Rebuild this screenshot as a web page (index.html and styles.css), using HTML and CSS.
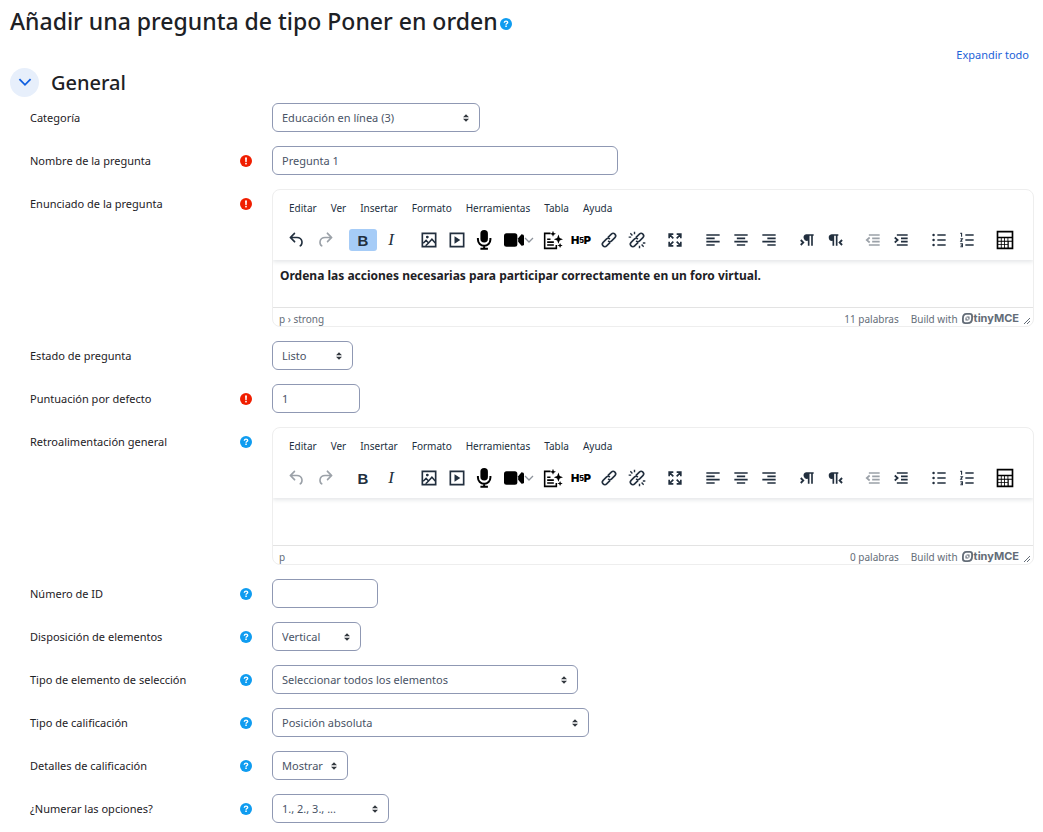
FILE: index.html
```html
<!DOCTYPE html>
<html lang="es">
<head>
    <meta charset="UTF-8">
    <meta name="viewport" content="width=device-width, initial-scale=1">
    <title>Añadir una pregunta de tipo Poner en orden</title>
    <link rel="stylesheet" href="styles.css">
</head>
<body>
    <!-- icon sprite -->
    <svg class="sprite" aria-hidden="true">
        <symbol id="i-help" viewBox="0 0 12 12">
            <circle cx="6" cy="6" r="6" fill="#0f9cf0"/>
            <path d="M4.3 4.7C4.4 3.6 5.1 3.1 6 3.1s1.7.5 1.7 1.4c0 1-1.6 1.1-1.6 2.2" fill="none" stroke="#fff" stroke-width="1.4"/>
            <rect x="5.3" y="7.5" width="1.5" height="1.5" fill="#fff"/>
        </symbol>
        <symbol id="i-required" viewBox="0 0 12 12">
            <circle cx="6" cy="6" r="6" fill="#f01e00"/>
            <path d="M5 2.5h2L6.7 7H5.3z" fill="#fff"/>
            <rect x="5.2" y="7.8" width="1.6" height="1.6" fill="#fff"/>
        </symbol>
        <symbol id="i-undo" viewBox="0 0 24 24"><path d="M6.4 8H12c3.7 0 6.2 2 6.8 5.1.6 2.7-.4 5.6-2.3 6.8a1 1 0 0 1-1-1.8c1.1-.6 1.8-2.7 1.4-4.6-.5-2.1-2.1-3.5-4.9-3.5H6.4l3.3 3.3a1 1 0 1 1-1.4 1.4l-5-5a1 1 0 0 1 0-1.4l5-5a1 1 0 0 1 1.4 1.4L6.4 8Z"/></symbol>
        <symbol id="i-redo" viewBox="0 0 24 24"><path d="M17.6 10H12c-2.8 0-4.4 1.4-4.9 3.5-.4 2 .3 4 1.4 4.6a1 1 0 1 1-1 1.8c-2-1.2-2.9-4.1-2.3-6.8.6-3 3-5.1 6.8-5.1h5.6l-3.3-3.3a1 1 0 1 1 1.4-1.4l5 5a1 1 0 0 1 0 1.4l-5 5a1 1 0 0 1-1.4-1.4l3.3-3.3Z"/></symbol>
        <symbol id="i-image" viewBox="0 0 24 24">
            <path d="M3 3h18v18H3zM5 5v14h14V5z" fill-rule="evenodd"/>
            <path d="M5 16l3.5-3.5 3 3L15.5 11l4 4.500M8 19l3.500-3.500" fill="none" stroke="currentColor" stroke-width="1.8"/>
            <circle cx="10" cy="8.500" r="1.700"/>
        </symbol>
        <symbol id="i-media" viewBox="0 0 24 24">
            <path d="M3 3h18v18H3zM5 5v14h14V5z" fill-rule="evenodd"/>
            <path d="M9 7.500l7 4.500-7 4.500z"/>
        </symbol>
        <symbol id="i-mic" viewBox="0 0 24 24">
            <rect x="6.500" y="0" width="9" height="15" rx="4.500"/>
            <path d="M3.500 9.500v2a7.500 7.500 0 0 0 15 0v-2M11 18.500v4M6.500 22.500h9" fill="none" stroke="currentColor" stroke-width="2.400"/>
        </symbol>
        <symbol id="i-video" viewBox="0 0 24 24">
            <rect x="0" y="4" width="16" height="16" rx="3"/>
            <path d="M17 10l4-5q3 0 3 2v10q0 2-3 2l-4-5z"/>
        </symbol>
        <symbol id="i-chevron" viewBox="0 0 10 10"><path d="M1 3l4 4 4-4" fill="none" stroke="currentColor" stroke-width="1.300"/></symbol>
        <symbol id="i-ai" viewBox="0 0 24 24">
            <path d="M9 4H2v18h14v-4M5 11h4M5 14.500h8M5 18h8" fill="none" stroke="currentColor" stroke-width="1.900"/>
            <path d="M18.500 5.500l1.500 4 4 1.500-4 1.500-1.500 4-1.500-4-4-1.500 4-1.500zM12 1l1 2.600 2.600 1-2.600 1-1 2.600-1-2.600-2.600-1 2.600-1zM20.500 15.500l.9 2.200 2.200.9-2.200.9-.9 2.200-.9-2.200-2.200-.9 2.200-.9z"/>
        </symbol>
        <symbol id="i-link" viewBox="0 0 24 24">
            <g fill="none" stroke="currentColor" stroke-width="1.900" transform="rotate(-45 12 12)">
                <path d="M11 15H5a3 3 0 0 1-3-3 3 3 0 0 1 3-3h5.500a3 3 0 0 1 3 3"/>
                <path d="M13 9h6a3 3 0 0 1 3 3 3 3 0 0 1-3 3h-5.500a3 3 0 0 1-3-3"/>
            </g>
        </symbol>
        <symbol id="i-unlink" viewBox="0 0 24 24">
            <use href="#i-link" width="24" height="24"/>
            <path d="M9 2v3M2 8.500h3M4 4l2.500 2.500M15 19v3M19 15.500h3M17.500 17.500L20 20" fill="none" stroke="currentColor" stroke-width="1.700"/>
        </symbol>
        <symbol id="i-full" viewBox="0 0 24 24"><path d="M5 10V5h5M14 5h5v5M19 14v5h-5M10 19H5v-5M5.500 5.500L10 10M18.500 5.500L14 10M18.500 18.500L14 14M5.500 18.500L10 14" fill="none" stroke="currentColor" stroke-width="2"/></symbol>
        <symbol id="i-left" viewBox="0 0 24 24"><path d="M4 6h16M4 10h10M4 14h16M4 18h10" fill="none" stroke="currentColor" stroke-width="2"/></symbol>
        <symbol id="i-center" viewBox="0 0 24 24"><path d="M4 6h16M7 10h10M4 14h16M7 18h10" fill="none" stroke="currentColor" stroke-width="2"/></symbol>
        <symbol id="i-right" viewBox="0 0 24 24"><path d="M4 6h16M10 10h10M4 14h16M10 18h10" fill="none" stroke="currentColor" stroke-width="2"/></symbol>
        <symbol id="i-ltr" viewBox="0 0 24 24">
            <path d="M11 5h9v2h-1v12h-2V7h-2v12h-2v-6a4 4 0 0 1-2-8z"/>
            <path d="M4.500 12l3 3-3 3" fill="none" stroke="currentColor" stroke-width="2.200"/>
        </symbol>
        <symbol id="i-rtl" viewBox="0 0 24 24">
            <path d="M8 5h8v2h-1v12h-2V7h-2v12H9v-6a4 4 0 0 1-1-8z"/>
            <path d="M20.500 12l-3 3 3 3" fill="none" stroke="currentColor" stroke-width="2.200"/>
        </symbol>
        <symbol id="i-outdent" viewBox="0 0 24 24"><path d="M7 6h13M11 10h9M11 14h9M7 18h13M8 9l-3.500 3L8 15" fill="none" stroke="currentColor" stroke-width="2"/></symbol>
        <symbol id="i-indent" viewBox="0 0 24 24"><path d="M7 6h13M12 10h8M12 14h8M7 18h13M4.500 9L8 12l-3.500 3" fill="none" stroke="currentColor" stroke-width="2"/></symbol>
        <symbol id="i-ul" viewBox="0 0 24 24">
            <path d="M10 6h10M10 12h10M10 18h10" fill="none" stroke="currentColor" stroke-width="2"/>
            <circle cx="5.500" cy="6" r="1.500"/><circle cx="5.500" cy="12" r="1.500"/><circle cx="5.500" cy="18" r="1.500"/>
        </symbol>
        <symbol id="i-ol" viewBox="0 0 24 24">
            <path d="M10 6h10M10 12h10M10 18h10" fill="none" stroke="currentColor" stroke-width="2"/>
            <path d="M4 4h1.500v4M4 10.500h2.500L4.500 13.500h2M4 16.500h2.500v3.500H4M4.500 18.200h2" fill="none" stroke="currentColor" stroke-width="1.300"/>
        </symbol>
        <symbol id="i-calc" viewBox="0 0 24 24"><path d="M2 1h20v22H2zM4 3v5h16V3zM4 10v3h3v-3zM8 10v3h3v-3zM12 10v3h3v-3zM16 10v3h4v-3zM4 14v3h3v-3zM8 14v3h3v-3zM12 14v3h3v-3zM16.500 14v7H20v-7zM4 18v3h3v-3zM8 18v3h3v-3zM12 18v3h3v-3z" fill-rule="evenodd"/></symbol>
        <symbol id="i-tiny" viewBox="0 0 12 12">
            <path d="M5 1h3.500Q11 1 11 3.500V6q0 5-5 5H3.500Q1 11 1 8.500V6q0-5 4-5z" fill="none" stroke="currentColor" stroke-width="2"/>
            <path d="M5 3.800h3.200V7H7V8.200H3.800V5H5zM5 5v2h2V5z" fill-rule="evenodd"/>
        </symbol>
        <symbol id="i-resize" viewBox="0 0 8 8"><path d="M1 7l6-6M4 7l3-3" fill="none" stroke="currentColor" stroke-width="1"/></symbol>
    </svg>

    <main class="page">
        <h1 class="title">Añadir una pregunta de tipo Poner en orden<button type="button" class="icon_btn" aria-label="Ayuda"><svg class="mark"><use href="#i-help"/></svg></button></h1>
        <div class="expand"><a href="#general">Expandir todo</a></div>

        <form id="general">
            <div class="section_head">
                <button type="button" class="toggle" aria-label="General"><svg class="toggle_icon"><use href="#i-chevron"/></svg></button>
                <h2>General</h2>
            </div>

            <div class="fields">
                <div class="row">
                    <div class="row_label"><label for="category">Categoría</label></div>
                    <select id="category" class="control w_category"><option>Educación en línea (3)</option></select>
                </div>
                <div class="row">
                    <div class="row_label"><label for="name">Nombre de la pregunta</label><svg class="mark"><use href="#i-required"/></svg></div>
                    <input id="name" type="text" class="control w_name" value="Pregunta 1">
                </div>
                <div class="row">
                    <div class="row_label"><span id="l_text">Enunciado de la pregunta</span><svg class="mark"><use href="#i-required"/></svg></div>
                    <div class="editor">
                        <div class="editor_head">
                            <div class="menubar">
                                <button type="button">Editar</button><button type="button">Ver</button><button type="button">Insertar</button><button type="button">Formato</button><button type="button">Herramientas</button><button type="button">Tabla</button><button type="button">Ayuda</button>
                            </div>
                            <div class="toolbar">
                                <div class="group">
                                    <button type="button" aria-label="Deshacer"><svg><use href="#i-undo"/></svg></button>
                                    <button type="button" aria-label="Rehacer" disabled><svg><use href="#i-redo"/></svg></button>
                                </div>
                                <div class="group">
                                    <button type="button" class="bold active">B</button>
                                    <button type="button" class="italic">I</button>
                                </div>
                                <div class="group">
                                    <button type="button" aria-label="Imagen"><svg><use href="#i-image"/></svg></button>
                                    <button type="button" aria-label="Multimedia"><svg><use href="#i-media"/></svg></button>
                                    <button type="button" class="dark" aria-label="Grabar audio"><svg><use href="#i-mic"/></svg></button>
                                    <button type="button" class="dark split" aria-label="Grabar video"><svg><use href="#i-video"/></svg><svg class="caret"><use href="#i-chevron"/></svg></button>
                                    <button type="button" class="dark" aria-label="Generar con IA"><svg><use href="#i-ai"/></svg></button>
                                    <button type="button" class="dark h5p">H<small>5</small>P</button>
                                    <button type="button" aria-label="Enlace"><svg><use href="#i-link"/></svg></button>
                                    <button type="button" aria-label="Quitar enlace"><svg><use href="#i-unlink"/></svg></button>
                                </div>
                                <div class="group">
                                    <button type="button" aria-label="Pantalla completa"><svg><use href="#i-full"/></svg></button>
                                </div>
                                <div class="group">
                                    <button type="button" aria-label="Izquierda"><svg><use href="#i-left"/></svg></button>
                                    <button type="button" aria-label="Centro"><svg><use href="#i-center"/></svg></button>
                                    <button type="button" aria-label="Derecha"><svg><use href="#i-right"/></svg></button>
                                </div>
                                <div class="group">
                                    <button type="button" aria-label="De izquierda a derecha"><svg><use href="#i-ltr"/></svg></button>
                                    <button type="button" aria-label="De derecha a izquierda"><svg><use href="#i-rtl"/></svg></button>
                                </div>
                                <div class="group">
                                    <button type="button" aria-label="Reducir sangría" disabled><svg><use href="#i-outdent"/></svg></button>
                                    <button type="button" aria-label="Aumentar sangría"><svg><use href="#i-indent"/></svg></button>
                                </div>
                                <div class="group">
                                    <button type="button" aria-label="Viñetas"><svg><use href="#i-ul"/></svg></button>
                                    <button type="button" aria-label="Numeración"><svg><use href="#i-ol"/></svg></button>
                                </div>
                                <div class="group">
                                    <button type="button" class="dark" aria-label="Ecuación"><svg><use href="#i-calc"/></svg></button>
                                </div>
                            </div>
                        </div>
                        <div class="editor_body" contenteditable="true" role="textbox" aria-labelledby="l_text"><p><strong>Ordena las acciones necesarias para participar correctamente en un foro virtual.</strong></p></div>
                        <div class="statusbar">
                            <span class="path">p › strong</span>
                            <span>11 palabras</span>
                            <span class="brand">Build with <svg class="tiny"><use href="#i-tiny"/></svg><b>tinyMCE</b></span>
                            <svg class="resize"><use href="#i-resize"/></svg>
                        </div>
                    </div>
                </div>
                <div class="row">
                    <div class="row_label"><label for="status">Estado de pregunta</label></div>
                    <select id="status" class="control w_status"><option>Listo</option></select>
                </div>
                <div class="row">
                    <div class="row_label"><label for="mark">Puntuación por defecto</label><svg class="mark"><use href="#i-required"/></svg></div>
                    <input id="mark" type="text" class="control w_mark" value="1">
                </div>
                <div class="row">
                    <div class="row_label"><span id="l_feedback">Retroalimentación general</span><button type="button" class="icon_btn" aria-label="Ayuda"><svg class="mark"><use href="#i-help"/></svg></button></div>
                    <div class="editor">
                        <div class="editor_head">
                            <div class="menubar">
                                <button type="button">Editar</button><button type="button">Ver</button><button type="button">Insertar</button><button type="button">Formato</button><button type="button">Herramientas</button><button type="button">Tabla</button><button type="button">Ayuda</button>
                            </div>
                            <div class="toolbar">
                                <div class="group">
                                    <button type="button" aria-label="Deshacer" disabled><svg><use href="#i-undo"/></svg></button>
                                    <button type="button" aria-label="Rehacer" disabled><svg><use href="#i-redo"/></svg></button>
                                </div>
                                <div class="group">
                                    <button type="button" class="bold">B</button>
                                    <button type="button" class="italic">I</button>
                                </div>
                                <div class="group">
                                    <button type="button" aria-label="Imagen"><svg><use href="#i-image"/></svg></button>
                                    <button type="button" aria-label="Multimedia"><svg><use href="#i-media"/></svg></button>
                                    <button type="button" class="dark" aria-label="Grabar audio"><svg><use href="#i-mic"/></svg></button>
                                    <button type="button" class="dark split" aria-label="Grabar video"><svg><use href="#i-video"/></svg><svg class="caret"><use href="#i-chevron"/></svg></button>
                                    <button type="button" class="dark" aria-label="Generar con IA"><svg><use href="#i-ai"/></svg></button>
                                    <button type="button" class="dark h5p">H<small>5</small>P</button>
                                    <button type="button" aria-label="Enlace"><svg><use href="#i-link"/></svg></button>
                                    <button type="button" aria-label="Quitar enlace"><svg><use href="#i-unlink"/></svg></button>
                                </div>
                                <div class="group">
                                    <button type="button" aria-label="Pantalla completa"><svg><use href="#i-full"/></svg></button>
                                </div>
                                <div class="group">
                                    <button type="button" aria-label="Izquierda"><svg><use href="#i-left"/></svg></button>
                                    <button type="button" aria-label="Centro"><svg><use href="#i-center"/></svg></button>
                                    <button type="button" aria-label="Derecha"><svg><use href="#i-right"/></svg></button>
                                </div>
                                <div class="group">
                                    <button type="button" aria-label="De izquierda a derecha"><svg><use href="#i-ltr"/></svg></button>
                                    <button type="button" aria-label="De derecha a izquierda"><svg><use href="#i-rtl"/></svg></button>
                                </div>
                                <div class="group">
                                    <button type="button" aria-label="Reducir sangría" disabled><svg><use href="#i-outdent"/></svg></button>
                                    <button type="button" aria-label="Aumentar sangría"><svg><use href="#i-indent"/></svg></button>
                                </div>
                                <div class="group">
                                    <button type="button" aria-label="Viñetas"><svg><use href="#i-ul"/></svg></button>
                                    <button type="button" aria-label="Numeración"><svg><use href="#i-ol"/></svg></button>
                                </div>
                                <div class="group">
                                    <button type="button" class="dark" aria-label="Ecuación"><svg><use href="#i-calc"/></svg></button>
                                </div>
                            </div>
                        </div>
                        <div class="editor_body" contenteditable="true" role="textbox" aria-labelledby="l_feedback"><p><br></p></div>
                        <div class="statusbar">
                            <span class="path">p</span>
                            <span>0 palabras</span>
                            <span class="brand">Build with <svg class="tiny"><use href="#i-tiny"/></svg><b>tinyMCE</b></span>
                            <svg class="resize"><use href="#i-resize"/></svg>
                        </div>
                    </div>
                </div>
                <div class="row">
                    <div class="row_label"><label for="idnumber">Número de ID</label><button type="button" class="icon_btn" aria-label="Ayuda"><svg class="mark"><use href="#i-help"/></svg></button></div>
                    <input id="idnumber" type="text" class="control w_id">
                </div>
                <div class="row">
                    <div class="row_label"><label for="layout">Disposición de elementos</label><button type="button" class="icon_btn" aria-label="Ayuda"><svg class="mark"><use href="#i-help"/></svg></button></div>
                    <select id="layout" class="control w_layout"><option>Vertical</option></select>
                </div>
                <div class="row">
                    <div class="row_label"><label for="selecttype">Tipo de elemento de selección</label><button type="button" class="icon_btn" aria-label="Ayuda"><svg class="mark"><use href="#i-help"/></svg></button></div>
                    <select id="selecttype" class="control w_selecttype"><option>Seleccionar todos los elementos</option></select>
                </div>
                <div class="row">
                    <div class="row_label"><label for="grading">Tipo de calificación</label><button type="button" class="icon_btn" aria-label="Ayuda"><svg class="mark"><use href="#i-help"/></svg></button></div>
                    <select id="grading" class="control w_grading"><option>Posición absoluta</option></select>
                </div>
                <div class="row">
                    <div class="row_label"><label for="details">Detalles de calificación</label><button type="button" class="icon_btn" aria-label="Ayuda"><svg class="mark"><use href="#i-help"/></svg></button></div>
                    <select id="details" class="control w_details"><option>Mostrar</option></select>
                </div>
                <div class="row">
                    <div class="row_label"><label for="numbering">¿Numerar las opciones?</label><button type="button" class="icon_btn" aria-label="Ayuda"><svg class="mark"><use href="#i-help"/></svg></button></div>
                    <select id="numbering" class="control w_numbering"><option>1., 2., 3., ...</option></select>
                </div>
            </div>
        </form>
    </main>
</body>
</html>
```

FILE: styles.css
```css
* {
    box-sizing: border-box;
}
body {
    margin: 0;
    background: #fff;
    color: #1d2125;
    font-family: "Noto Sans", "Open Sans", sans-serif;
    font-size: 11px;
}
button {
    margin: 0;
    padding: 0;
    border: 0;
    background: none;
    font: inherit;
    color: inherit;
    cursor: pointer;
}
svg {
    display: block;
    flex: none;
    fill: currentColor;
}
.sprite {
    position: absolute;
    width: 0;
    height: 0;
}
.page {
    padding: 5px 10px 10px;
}
.title {
    display: flex;
    align-items: center;
    gap: 2px;
    margin: 0;
    font-size: 23px;
    line-height: 32px;
    font-weight: 500;
}
.title .icon_btn {
    padding-top: 5px;
}
.mark {
    width: 12px;
    height: 12px;
}
.expand {
    padding: 9px 4px 0;
    text-align: right;
    line-height: 18px;
}
.expand a {
    color: #1b62d8;
    text-decoration: none;
}
.section_head {
    display: flex;
    align-items: center;
    gap: 12px;
    height: 30px;
    margin-top: 3px;
}
.section_head h2 {
    margin: 0;
    font-size: 20px;
    font-weight: 500;
}
.toggle {
    display: flex;
    align-items: center;
    justify-content: center;
    width: 29px;
    height: 29px;
    border-radius: 50%;
    background: #e7effb;
    color: #0f5fe0;
}
.toggle_icon {
    width: 14px;
    height: 14px;
}

/* form rows */
.fields {
    display: flex;
    flex-direction: column;
    gap: 14px;
    padding: 6px 0 0 20px;
}
.row {
    display: grid;
    grid-template-columns: 222px minmax(0, 1fr);
    column-gap: 20px;
    align-items: start;
}
.row_label {
    display: flex;
    align-items: center;
    justify-content: space-between;
    height: 29px;
}
.control {
    max-width: 100%;
    height: 29px;
    margin: 0;
    padding: 0 9px;
    border: 1px solid #8f98b3;
    border-radius: 6px;
    background-color: #fff;
    color: #495366;
    font: inherit;
}
select.control {
    appearance: none;
    padding-right: 20px;
    background-image: url("data:image/svg+xml,%3Csvg xmlns='http://www.w3.org/2000/svg' viewBox='0 0 4 5'%3E%3Cpath fill='%23343a40' d='M2 0L0 2h4zm0 5L0 3h4z'/%3E%3C/svg%3E");
    background-repeat: no-repeat;
    background-position: right 10px center;
    background-size: 6px 8px;
}
.w_category { width: 208px; }
.w_name { width: 346px; }
.w_status { width: 81px; }
.w_mark { width: 88px; }
.w_id { width: 106px; }
.w_layout { width: 89px; }
.w_selecttype { width: 306px; }
.w_grading { width: 317px; }
.w_details { width: 76px; }
.w_numbering { width: 117px; }

/* editor */
.editor {
    margin-right: -1px;
    border: 1px solid #eee;
    border-radius: 8px;
    overflow: hidden;
    color: #222f3e;
}
.editor_head {
    padding: 7px 10px 9px;
    box-shadow: 0 2px 4px rgba(34, 47, 62, .12);
}
.menubar {
    display: flex;
    gap: 14px;
    padding: 0 6px;
    font-size: 10px;
    line-height: 22px;
}
.toolbar {
    display: flex;
    flex-wrap: wrap;
    gap: 10px;
    padding-top: 10px;
}
.group {
    display: flex;
}
.group button {
    display: flex;
    align-items: center;
    justify-content: center;
    width: 28px;
    height: 22px;
    border-radius: 3px;
}
.group svg {
    width: 20px;
    height: 20px;
}
.group button:disabled {
    color: #9ba1a8;
}
.group .active {
    background: #a6ccf7;
}
.group .dark {
    color: #000;
}
.group .split {
    width: 40px;
}
.group .split .caret {
    width: 10px;
    height: 10px;
    color: #8d939b;
}
.group .bold {
    font: bold 15px "Liberation Sans", Arial, sans-serif;
}
.group .italic {
    font: italic 17px "Liberation Serif", serif;
}
.group .h5p {
    font: 900 11px "Inter", "Liberation Sans", sans-serif;
}
.group .h5p small {
    font-size: 7px;
}
.editor_body {
    height: 47px;
    padding: 7px;
    color: #1d2125;
    outline: none;
    font-size: 12px;
    line-height: 18px;
}
.editor_body p {
    margin: 0;
}
.statusbar {
    display: flex;
    gap: 12px;
    height: 19px;
    padding: 0 2px 0 6px;
    border-top: 1px solid #e3e3e3;
    color: #646d78;
    font-size: 10px;
    line-height: 22px;
}
.path {
    flex: 1;
}
.brand {
    display: flex;
}
.brand b {
    font: bold 11px/20px "Inter", sans-serif;
}
.tiny {
    width: 11px;
    height: 11px;
    margin: 5px 1px 0 4px;
}
.resize {
    width: 8px;
    height: 8px;
    margin: 9px 0 0 -8px;
}
```
